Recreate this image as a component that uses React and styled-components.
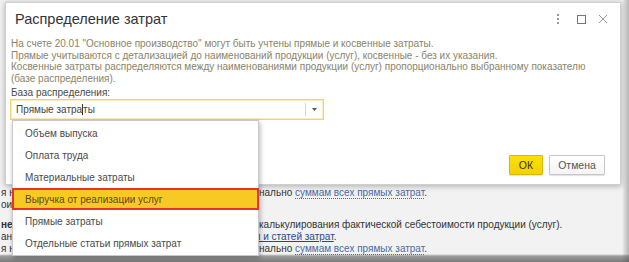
import styled, { createGlobalStyle } from "styled-components";

const GlobalStyle = createGlobalStyle`
  body {
    margin: 0;
    background: #f2f2f2;
    font-family: Arial, "Liberation Sans", sans-serif;
  }
`;

const options = [
  "Объем выпуска",
  "Оплата труда",
  "Материальные затраты",
  "Выручка от реализации услуг",
  "Прямые затраты",
  "Отдельные статьи прямых затрат",
];

const Screen = styled.div`
  position: relative;
  width: 629px;
  height: 262px;
  overflow: hidden;
  background:
    linear-gradient(to bottom, rgba(0, 0, 0, 0) 254px, rgba(90, 90, 90, 0.55) 256px, rgba(80, 80, 80, 0.75) 262px),
    linear-gradient(to right, #f2f2f2 622px, #dedede 624px, #b4b4b4 629px);
`;

const Backdrop = styled.div`
  padding-top: 187px;
  font-size: 10px;
  line-height: 12px;
  color: #333;
`;

const BgLine = styled.div`
  display: grid;
  grid-template-columns: 258px 1fr;
  height: ${(p) => p.$h || 12}px;
  white-space: nowrap;
`;

const BgLeft = styled.div`
  overflow: hidden;
  padding-left: 1px;
  font-weight: ${(p) => (p.$bold ? "bold" : "normal")};
`;

const BgRight = styled.div`
  margin-left: ${(p) => p.$shift || 1}px;
`;

const DotLink = styled.span`
  color: #4a6aa5;
  border-bottom: 1px dotted #4a6aa5;
`;

const SolidLink = styled.span`
  color: #1f4a8c;
  text-decoration: underline;
`;

const Dialog = styled.div`
  position: absolute;
  left: 5px;
  top: 2px;
  width: 616px;
  height: 183px;
  box-sizing: border-box;
  background: #fff;
  border: 1px solid #cfcfcf;
  box-shadow: 0 1px 6px rgba(0, 0, 0, 0.3);
  display: flex;
  flex-direction: column;
`;

const TitleBar = styled.div`
  display: flex;
  align-items: center;
  justify-content: space-between;
  height: 32px;
  padding: 0 12px 0 9px;
`;

const Title = styled.div`
  font-size: 14.5px;
  color: #333;
`;

const WinButtons = styled.div`
  display: flex;
  align-items: center;
`;

const WinIcon = styled.svg`
  display: block;
  margin-left: ${(p) => p.$gap || 0}px;
`;

const Body = styled.div`
  padding: 3px 6px 0 4px;
`;

const Desc = styled.div`
  font-size: 10px;
  line-height: 11.5px;
  color: #8a8468;
  padding-left: 1px;
  white-space: nowrap;
`;

const Label = styled.div`
  margin-top: 3px;
  font-size: 10px;
  line-height: 12px;
  color: #4a4a4a;
  padding-left: 1px;
`;

const Select = styled.div`
  position: relative;
  width: 314px;
  height: 21px;
  box-sizing: border-box;
  border: 1px solid #f1d468;
  box-shadow: inset 0 0 0 1px #fbeeb8;
  display: flex;
  align-items: center;
`;

const SelectText = styled.div`
  flex: 1;
  padding-left: 5px;
  font-size: 10px;
  color: #444;
`;

const Caret = styled.span`
  display: inline-block;
  width: 1px;
  height: 11px;
  background: #333;
  vertical-align: -2px;
`;

const DropButton = styled.div`
  width: 17px;
  height: 13px;
  border-left: 1px solid #d6d6d6;
  display: flex;
  align-items: center;
  justify-content: center;
`;

const List = styled.div`
  position: absolute;
  left: 1px;
  top: 20px;
  width: 247px;
  box-sizing: border-box;
  padding: 1px 0;
  background: #fff;
  border: 1px solid #c9c9c9;
  box-shadow: 1px 2px 5px rgba(0, 0, 0, 0.3);
  z-index: 2;
`;

const Item = styled.div`
  height: 22px;
  box-sizing: border-box;
  display: flex;
  align-items: center;
  padding-left: ${(p) => (p.$active ? 11 : 12)}px;
  font-size: 10px;
  color: ${(p) => (p.$active ? "#5a4a20" : "#4a4a4a")};
  background: ${(p) => (p.$active ? "#f8c923" : "transparent")};
  border: ${(p) => (p.$active ? "2px solid #e8322a" : "none")};
  margin: 0 ${(p) => (p.$active ? -1 : 0)}px;
`;

const Footer = styled.div`
  margin-top: auto;
  display: flex;
  justify-content: flex-end;
  gap: 6px;
  padding: 0 15px 9px 0;
`;

const Button = styled.button`
  height: 20px;
  min-width: ${(p) => p.$w}px;
  box-sizing: border-box;
  padding: 0 8px;
  font-family: Arial, "Liberation Sans", sans-serif;
  font-size: 10.5px;
  border-radius: 1px;
  color: ${(p) => (p.$primary ? "#3a3000" : "#555")};
  background: ${(p) => (p.$primary ? "linear-gradient(#fbe000, #f3d200)" : "linear-gradient(#ffffff, #f4f4f4)")};
  border: 1px solid ${(p) => (p.$primary ? "#d8b800" : "#c6c6c6")};
  box-shadow: 0 1px 1px rgba(0, 0, 0, 0.12);
`;

export default function App() {
  return (
    <>
      <GlobalStyle />
      <Screen>
        <Backdrop>
          <BgLine>
            <BgLeft>я наименованиями продукции (услуг) пропорцио</BgLeft>
            <BgRight>
              нально <DotLink>суммам всех прямых затрат</DotLink>.
            </BgRight>
          </BgLine>
          <BgLine $h={20}>
            <BgLeft>оизводства</BgLeft>
            <BgRight />
          </BgLine>
          <BgLine>
            <BgLeft $bold>необходимости</BgLeft>
            <BgRight>калькулирования фактической себестоимости продукции (услуг).</BgRight>
          </BgLine>
          <BgLine>
            <BgLeft>аналитики</BgLeft>
            <BgRight $shift={-3}>
              <SolidLink>п и статей затрат</SolidLink>.
            </BgRight>
          </BgLine>
          <BgLine>
            <BgLeft>я наименованиями продукции (услуг) пропорцио</BgLeft>
            <BgRight>
              нально <DotLink>суммам всех прямых затрат</DotLink>.
            </BgRight>
          </BgLine>
        </Backdrop>

        <Dialog>
          <TitleBar>
            <Title>Распределение затрат</Title>
            <WinButtons>
              <WinIcon width="4" height="10" viewBox="0 0 4 10">
                <rect x="1" y="0" width="2" height="2" fill="#999" />
                <rect x="1" y="4" width="2" height="2" fill="#999" />
                <rect x="1" y="8" width="2" height="2" fill="#999" />
              </WinIcon>
              <WinIcon $gap={16} width="10" height="10" viewBox="0 0 10 10">
                <rect x="1.5" y="1.5" width="8" height="8" fill="none" stroke="#777" />
              </WinIcon>
              <WinIcon $gap={12} width="10" height="10" viewBox="0 0 10 10">
                <path d="M1 1 L9 9 M9 1 L1 9" stroke="#999" strokeWidth="1" />
              </WinIcon>
            </WinButtons>
          </TitleBar>
          <Body>
            <Desc>
              <div>На счете 20.01 "Основное производство" могут быть учтены прямые и косвенные затраты.</div>
              <div>Прямые учитываются с детализацией до наименований продукции (услуг), косвенные - без их указания.</div>
              <div>
                Косвенные затраты распределяются между наименованиями продукции (услуг) пропорционально выбранному показателю
              </div>
              <div>(базе распределения).</div>
            </Desc>
            <Label>База распределения:</Label>
            <Select>
              <SelectText>
                Прямые затра<Caret />ты
              </SelectText>
              <DropButton>
                <svg width="5" height="3" viewBox="0 0 5 3">
                  <path d="M0 0 H5 L2.5 3 Z" fill="#555" />
                </svg>
              </DropButton>
              <List>
                {options.map((o) => (
                  <Item key={o} $active={o === "Выручка от реализации услуг"}>
                    {o}
                  </Item>
                ))}
              </List>
            </Select>
          </Body>
          <Footer>
            <Button $primary $w={34}>ОК</Button>
            <Button $w={56}>Отмена</Button>
          </Footer>
        </Dialog>
      </Screen>
    </>
  );
}
